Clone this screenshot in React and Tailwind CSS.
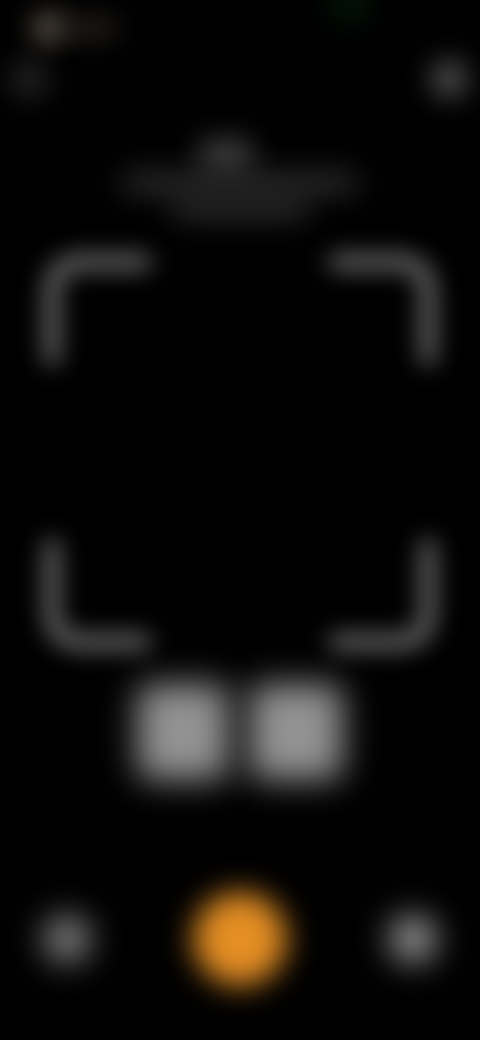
export default function App() {
  return (
    <div className="w-[480px] h-[1040px] bg-black overflow-hidden flex flex-col">
      {/* status bar */}
      <div className="h-[54px] shrink-0 flex pl-[34px] pt-[14px]">
        <div className="w-[28px] h-[28px] rounded-full bg-[#7e7264] blur-[14px]" />
        <div className="-ml-[2px] mt-[7px] w-[58px] h-[14px] rounded-full bg-[#38322c] blur-[14px]" />
        <div className="ml-[214px] -mt-[26px] w-[34px] h-[30px] rounded-full bg-[#06240e] blur-[16px]" />
      </div>

      {/* top actions */}
      <div className="h-[50px] shrink-0 flex items-center justify-between px-[16px]">
        <div className="w-[26px] h-[28px] rounded-full bg-[#484848] blur-[16px]" />
        <div className="w-[30px] h-[32px] rounded-full bg-[#747474] blur-[15px]" />
      </div>

      {/* heading */}
      <div className="h-[152px] shrink-0 flex flex-col items-center pt-[38px]">
        <div className="mr-[28px] w-[56px] h-[26px] rounded-full bg-[#505050] blur-[15px]" />
        <div className="mt-[6px] w-[236px] h-[18px] rounded-full bg-[#383838] blur-[15px]" />
        <div className="mt-[6px] w-[140px] h-[20px] rounded-full bg-[#323232] blur-[15px]" />
      </div>

      {/* scan frame */}
      <div className="h-[392px] shrink-0 px-[46px] flex flex-col justify-between">
        <div className="flex justify-between">
          <div className="w-[104px] h-[108px] border-l-[12px] border-t-[12px] border-[#909090] rounded-tl-[32px] blur-[12px]" />
          <div className="w-[104px] h-[108px] border-r-[12px] border-t-[12px] border-[#909090] rounded-tr-[32px] blur-[12px]" />
        </div>
        <div className="flex justify-between">
          <div className="w-[104px] h-[108px] border-l-[12px] border-b-[12px] border-[#909090] rounded-bl-[32px] blur-[12px]" />
          <div className="w-[104px] h-[108px] border-r-[12px] border-b-[12px] border-[#909090] rounded-br-[32px] blur-[12px]" />
        </div>
      </div>

      {/* mode tiles */}
      <div className="mt-[36px] shrink-0 flex justify-center gap-[20px]">
        <div className="w-[92px] h-[96px] rounded-[14px] bg-[#929292] blur-[17px]" />
        <div className="w-[94px] h-[96px] rounded-[14px] bg-[#929292] blur-[17px]" />
      </div>

      {/* camera controls */}
      <div className="mt-[112px] shrink-0 flex items-center justify-between px-[44px]">
        <div className="w-[46px] h-[46px] rounded-full bg-[#8c8c8c] blur-[17px]" />
        <div className="w-[94px] h-[94px] rounded-full bg-[#e48e24] blur-[15px]" />
        <div className="w-[46px] h-[46px] rounded-full bg-[#a4a4a4] blur-[17px]" />
      </div>
    </div>
  );
}
